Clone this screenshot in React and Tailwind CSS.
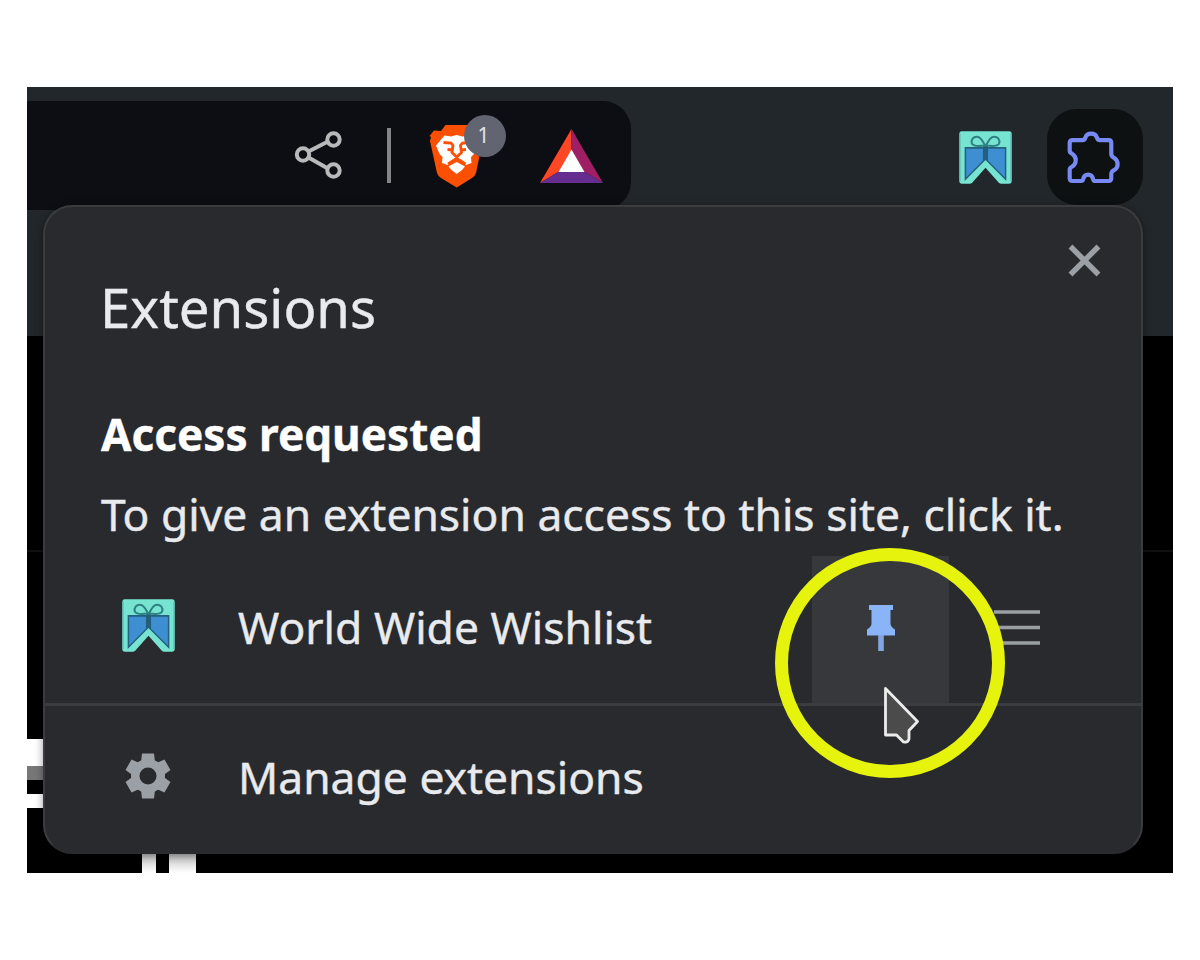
import React from "react";

function ShareIcon() {
  return (
    <svg className="h-[50px] w-[50px] shrink-0" viewBox="0 0 50 50" fill="none" stroke="#b9b9bb" strokeWidth="4">
      <path d="M14.5 20.500 33 11M14.5 26.500 33 37" />
      <circle cx="9" cy="23.500" r="6.200" />
      <circle cx="39.500" cy="8.500" r="6.200" />
      <circle cx="39.500" cy="39.500" r="6.200" />
    </svg>
  );
}

function LionIcon() {
  return (
    <svg className="h-[64px] w-[56px]" viewBox="0 0 56 64">
      <path d="M16.500 1H39l5 5.500 7-1 4 6.500-1.500 5L47 49q-1 3-4 5L27.700 63.500 12 54q-3-2-4-5L1 17 2 13 .5 12 5 6.500l7 .5z" fill="#fb4f04" />
      <path d="M15.500 11.500 22 12.500 27.700 11 33.500 12.500 40 11.500 48.500 21.500 45 30 42 33 42.500 39 37 41 27.700 35.500 18.500 41 13 39 13.500 33 10.500 30 7 21.500z" fill="#fff" />
      <path d="M19.500 42.500 27.700 38 36 42.500 33 46 27.700 50 22.500 46z" fill="#fff" />
      <path d="M14.500 18.500 22 19 24 21.500 23 28.500 27.700 33 32.500 28.500 31.500 21.500 33.500 19 41 18.500M18.500 25.500 23 26M37 25.500 32.500 26M19 40 27.700 34.500 36.500 40M27.700 32V38" fill="none" stroke="#fb4f04" strokeWidth="2.800" />
    </svg>
  );
}

function TriangleIcon() {
  return (
    <svg className="h-[54px] w-[63px] shrink-0" viewBox="0 0 63 54">
      <path d="M31.500 0 0 54 19 42.500 31.500 21z" fill="#ff4724" />
      <path d="M31.500 0 63 54 44 42.500 31.500 21z" fill="#9e1f63" />
      <path d="M0 54H63L44 42.500H19z" fill="#662d91" />
      <path d="M31.500 20.500 44.500 43H18.500z" fill="#fff" />
    </svg>
  );
}

function WishlistIcon() {
  return (
    <svg className="h-[53px] w-[53px] shrink-0" viewBox="0 0 157 157">
      <path d="M8 1H149Q156 1 156 9V148Q156 156 148 156H125Q121 156 118 153L78.500 109 39 153Q36 156 32 156H9Q1 156 1 148V9Q1 1 8 1z" fill="#76e4d0" />
      <path d="M2.500 8V149M154.500 8V149" stroke="#58b5ad" strokeWidth="4" />
      <path d="M19 50H138V143L78.500 83 19 143z" fill="#3d8fd1" stroke="#24627c" strokeWidth="4.500" />
      <path d="M71 44H86V90L78.500 83 71 90z" fill="#235f7b" />
      <path d="M77 43C70 28 63 17 53 17 42 17 35 26 38 37 43 46 63 45 77 43ZM80 43C87 28 94 17 104 17 115 17 122 26 119 37 114 46 94 45 80 43Z" fill="#76e4d0" stroke="#2e8284" strokeWidth="6" />
    </svg>
  );
}

function PuzzleIcon() {
  return (
    <svg className="-ml-[3px] h-[57px] w-[57px]" viewBox="0 0 170 170" fill="none" stroke="#7889f3" strokeWidth="12.500" strokeLinejoin="round">
      <path d="M23 33H52Q59 33 61 25C64 17 70 14 78 14S92 17 95 25Q97 33 104 33H130Q138 33 138 41V74Q138 82 146 86C154 91 157 97 157 105S154 118 146 123Q138 127 138 135V147Q138 155 130 155H90Q85 155 84 150C82 141 77 136 69 136S56 141 54 150Q53 155 48 155H22Q14 155 14 147V121Q14 116 20 113C28 109 32 101 32 92S28 78 20 73Q14 70 14 65V41Q14 33 23 33Z" />
    </svg>
  );
}

function PinIcon() {
  return (
    <svg className="h-[46px] w-[28px]" viewBox="0 0 28 46" fill="#8ab4f8">
      <path d="M2 0H26V5H23.500V19Q24 22 28 24.500V30.500H0V24.500Q4 22 4.500 19V5H2z" />
      <path d="M11.200 30H16.800V46H11.200z" fill="#80a5e2" />
    </svg>
  );
}

function GearIcon() {
  return (
    <svg className="h-[50px] w-[50px] shrink-0" viewBox="0 0 50 50">
      <g fill="#9aa0a6">
        <circle cx="25" cy="25" r="17" />
        <path d="M19 2.500H31L32 11H18z M19 47.500H31L32 39H18z" />
        <path d="M19 2.500H31L32 11H18z M19 47.500H31L32 39H18z" transform="rotate(60 25 25)" />
        <path d="M19 2.500H31L32 11H18z M19 47.500H31L32 39H18z" transform="rotate(120 25 25)" />
      </g>
      <circle cx="25" cy="25" r="8.500" fill="#292a2d" />
    </svg>
  );
}

function PointerIcon() {
  return (
    <svg className="absolute left-[854px] top-[597px] h-[64px] w-[42px]" viewBox="0 0 42 64">
      <path d="M4.500 4.500 36.500 37.500 28 46.500V55Q27 59 22.500 58L15.500 51H4.500z" fill="#4b4b4b" stroke="#ececec" strokeWidth="2.800" strokeLinejoin="round" />
    </svg>
  );
}

function Toolbar() {
  return (
    <div className="flex h-[249px] items-start bg-[#22272b] pt-[14px]">
      <div className="flex h-[109px] w-[604px] items-center rounded-r-[28px] bg-[#0d0e13]">
        <div className="ml-[267px] flex items-center">
          <ShareIcon />
          <div className="ml-[43px] h-[55px] w-[4px] bg-[#858587]" />
          <div className="relative ml-[38px]">
            <LionIcon />
            <span className="absolute left-[35px] top-[-9px] flex h-[42px] w-[42px] items-center justify-center rounded-full bg-[#636472] pr-[3px] text-[21px] leading-none text-[#dfe2e8]">1</span>
          </div>
          <div className="ml-[55px]">
            <TriangleIcon />
          </div>
        </div>
      </div>
      <div className="ml-auto mr-[30px] mt-[8px] flex items-center gap-[35px]">
        <WishlistIcon />
        <div className="flex h-[96px] w-[96px] items-center justify-center rounded-[30px] bg-[#0d1112]">
          <PuzzleIcon />
        </div>
      </div>
    </div>
  );
}

function PageContent() {
  return (
    <div className="flex h-[537px] flex-col bg-black">
      <div className="mt-[214px] h-[2px] bg-[#101010]" />
      <div className="mt-[187px] h-[27px] w-[40px] bg-white" />
      <div className="h-[14px] w-[40px] bg-[#777]" />
      <div className="mt-[14px] h-[14px] w-[40px] bg-white" />
      <div className="mt-auto flex h-[30px] gap-[13px] pl-[115px]">
        <div className="w-[14px] bg-gradient-to-b from-[#bbb] from-30% to-white" />
        <div className="w-[27px] bg-gradient-to-b from-[#bbb] from-30% to-white" />
      </div>
    </div>
  );
}

function ExtensionsMenu() {
  return (
    <div className="absolute left-[16px] top-[118px] flex h-[649px] w-[1100px] flex-col rounded-[29px] border-2 border-[#3a3c3d] border-b-[#2b2c2f] bg-[#292a2d] text-[44.400px] leading-[60px] text-[#e8eaed] shadow-[0_2px_8px_rgba(0,0,0,0.4)] [-webkit-text-stroke:0.4px]">
      <div className="flex items-start justify-between pl-[55px] pr-[39px]">
        <h1 className="mt-[70px] text-[54.500px]">Extensions</h1>
        <svg className="mt-[36px] h-[35px] w-[35px]" viewBox="0 0 35 35" stroke="#9aa0a6" strokeWidth="5.500">
          <path d="M3.500 3.500 31.500 31.500M31.500 3.500 3.500 31.500" />
        </svg>
      </div>
      <h2 className="mt-[67px] pl-[56px] text-[44.100px] font-bold text-white">Access requested</h2>
      <p className="mt-[20px] whitespace-nowrap pl-[56px]">To give an extension access to this site, click it.</p>
      <div className="mt-[12px] flex h-[147px] items-center pl-[77px]">
        <div className="-mt-[9px]"><WishlistIcon /></div>
        <div className="-mt-[5px] ml-[63px] w-[574px]">World Wide Wishlist</div>
        <div className="flex h-full w-[137px] items-center justify-center bg-[#37383b] pb-[4px]">
          <PinIcon />
        </div>
        <svg className="-mt-[4px] ml-[45px] h-[38px] w-[46px]" viewBox="0 0 46 38" stroke="#9a9fa4" strokeWidth="3.500">
          <path d="M0 3H46M0 18.500H46M0 34H46" />
        </svg>
      </div>
      <div className="h-[3px] shrink-0 bg-[#3a3c3f]" />
      <div className="flex flex-1 items-center pl-[78px]">
        <div className="-mt-[6px]"><GearIcon /></div>
        <div className="-mt-[4px] ml-[65px]">Manage extensions</div>
      </div>
    </div>
  );
}

export default function App() {
  return (
    <main className="flex h-[960px] w-[1200px] items-start overflow-hidden bg-white pl-[27px] pt-[87px] font-['Noto_Sans',sans-serif]">
      <div className="relative h-[786px] w-[1146px] overflow-hidden">
        <Toolbar />
        <PageContent />
        <ExtensionsMenu />
        <div className="absolute left-[747.500px] top-[461px] h-[230px] w-[230px] rounded-full border-[13px] border-[#e5f30d]" />
        <PointerIcon />
      </div>
    </main>
  );
}
